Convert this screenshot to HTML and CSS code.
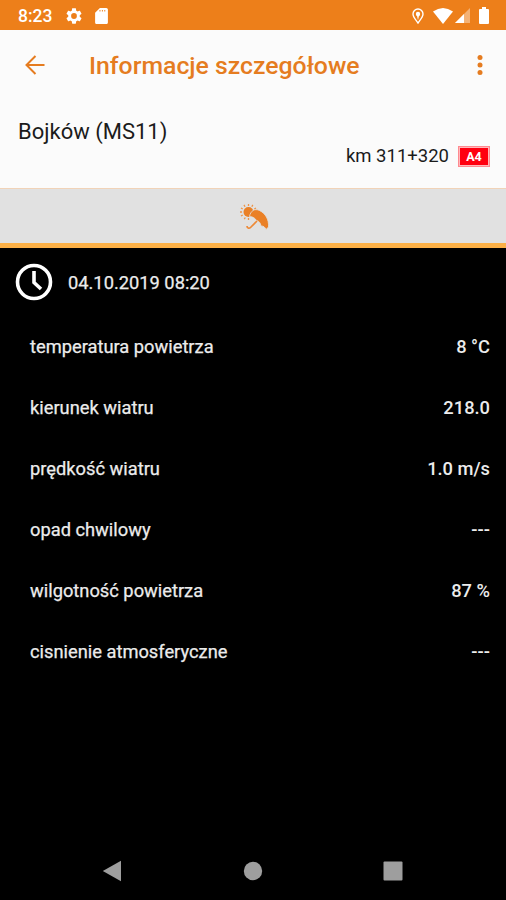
FILE: index.html
```html
<!DOCTYPE html>
<html lang="pl">
<head>
<meta charset="utf-8">
<title>Informacje szczegółowe</title>
<link rel="stylesheet" href="styles.css">
</head>
<body>
<div class="screen">
  <div class="status">
    <span class="time">8:23</span>
    <svg class="gear" viewBox="2 2 20 20"><path fill-rule="evenodd" d="M19.14 12.94c.04-.3.06-.61.06-.94s-.02-.64-.07-.94l2.03-1.58c.18-.14.23-.41.12-.61l-1.92-3.32c-.12-.22-.37-.29-.59-.22l-2.39.96c-.5-.38-1.03-.7-1.62-.94l-.36-2.54c-.04-.24-.24-.41-.48-.41h-3.84c-.24 0-.43.17-.47.41l-.36 2.54c-.59.24-1.13.57-1.62.94l-2.39-.96c-.22-.08-.47 0-.59.22L2.74 8.87c-.12.21-.08.47.12.61l2.03 1.58c-.05.3-.09.63-.09.94s.02.64.07.94l-2.03 1.58c-.18.14-.23.41-.12.61l1.92 3.32c.12.22.37.29.59.22l2.39-.96c.5.38 1.03.7 1.62.94l.36 2.54c.05.24.24.41.48.41h3.84c.24 0 .44-.17.47-.41l.36-2.54c.59-.24 1.13-.56 1.62-.94l2.39.96c.22.08.47 0 .59-.22l1.92-3.32c.12-.22.07-.47-.12-.61zM12 15.6a3.6 3.6 0 1 1 0-7.2 3.6 3.6 0 0 1 0 7.2z"/></svg>
    <svg class="card" viewBox="4 2 16 20"><path fill-rule="evenodd" d="M18 2h-8L4.02 8 4 20c0 1.1.9 2 2 2h12c1.1 0 2-.9 2-2V4c0-1.1-.9-2-2-2zM9.5 4.500h1.200v2H9.500zm3 0h1.200v2h-1.200zm3 0h1.200v2h-1.200z"/></svg>
    <span class="fill"></span>
    <svg class="pin" viewBox="0 0 12 16"><path class="line" d="M6 15C3.5 11.500 1 9 1 6a5 5 0 0 1 10 0c0 3-2.500 5.500-5 9z"/><circle cx="6" cy="6" r="2.200"/><path d="M4.800 7h2.400L6 12z"/></svg>
    <svg class="wifi" viewBox="0 0 20 16"><path d="M0 3.500Q10-3.500 20 3.500L10 16z"/></svg>
    <svg class="signal" viewBox="0 0 15 15"><path opacity=".4" d="M15 0v15H0z"/><path d="M9 6v9H0z"/></svg>
    <svg class="battery" viewBox="0 0 10 17"><path d="M3 0h4v2h2q1 0 1 1v13q0 1-1 1H1q-1 0-1-1V3q0-1 1-1h2z"/></svg>
  </div>
  <header class="bar">
    <svg class="back" viewBox="0 0 20 20"><path d="M19.500 10H2M10.500 1L1.500 10l9 9"/></svg>
    <h1 class="title">Informacje szczegółowe</h1>
    <svg class="more" viewBox="0 0 6 20"><circle cx="3" cy="2.600" r="2.500"/><circle cx="3" cy="10" r="2.500"/><circle cx="3" cy="17.400" r="2.500"/></svg>
  </header>
  <section class="station">
    <div class="name">Bojków (MS11)</div>
    <div class="place"><span>km 311+320</span><span class="road"><b>A4</b></span></div>
  </section>
  <div class="tab">
    <svg class="weather" viewBox="0 0 30 30">
      <circle class="sun" cx="9.500" cy="8" r="5"/>
      <path class="rays" d="M9.500 2V0M6 2.700L5 .9M3.700 5L2 4M3 8H1M3.700 11L2 12M12.800 2.700l1-1.800M15.300 5L17 4M6.300 13.500l-1 1.700M9.500 14v2"/>
      <path class="canopy" d="M10.500 12.500C11.500 7 15.500 4 20.500 6.500c6 3 9.500 9 9 16.500L27 25.500c-1-2.500-2.500-3.500-5-3.500-.5-3-1.800-4.800-4.500-5.500-1.500-2.500-4-4-7-4z"/>
      <path class="handle" d="M18 17l-6.500 6.500c-1.500 1.500-3.500.5-3.500-1.500"/>
    </svg>
  </div>
  <main class="data">
    <div class="stamp">
      <svg class="clock" viewBox="0 0 38 38"><circle cx="19" cy="19" r="16.500"/><path d="M19 8v11.500l7 6.500"/></svg>
      <span>04.10.2019 08:20</span>
    </div>
    <div class="row"><span>temperatura powietrza</span><span class="value">8 °C</span></div>
    <div class="row"><span>kierunek wiatru</span><span class="value">218.0</span></div>
    <div class="row"><span>prędkość wiatru</span><span class="value">1.0 m/s</span></div>
    <div class="row"><span>opad chwilowy</span><span class="value">---</span></div>
    <div class="row"><span>wilgotność powietrza</span><span class="value">87 %</span></div>
    <div class="row"><span>cisnienie atmosferyczne</span><span class="value">---</span></div>
  </main>
  <nav class="nav">
    <svg viewBox="0 0 20 22"><path d="M19 .8v20.400L.8 11z"/></svg>
    <svg viewBox="0 0 20 22"><circle cx="10" cy="11" r="9.200"/></svg>
    <svg viewBox="0 0 20 22"><rect x=".5" y="1.500" width="19" height="19" rx="1"/></svg>
  </nav>
</div>
</body>
</html>
```

FILE: styles.css
```css
* { box-sizing: border-box; }
body { margin: 0; font-family: Roboto, "Noto Sans", sans-serif; background: #000; }
svg { display: block; flex: none; }
.screen { width: 506px; height: 900px; display: flex; flex-direction: column; background: #000; }
.status { height: 30px; flex: none; display: flex; align-items: center; padding: 1px 17px 0 18px; background: #ed7f1a; color: #fff; }
.status svg { fill: #fff; }
.time { width: 48px; font-size: 17.5px; font-weight: 500; line-height: 30px; }
.gear { width: 16px; height: 16px; }
.card { width: 13px; height: 16px; margin-left: 13px; }
.fill { flex: 1; }
.pin { width: 12px; height: 16px; margin-right: 9px; }
.pin .line { fill: none; stroke: #fff; stroke-width: 1.4; }
.wifi { width: 20px; height: 16px; margin-right: 2px; }
.signal { width: 15px; height: 15px; margin-right: 9px; }
.battery { width: 10px; height: 17px; }
.bar { height: 71px; flex: none; display: flex; align-items: center; padding: 0 23px 2px 25px; background: #fbfbfb; }
.back { width: 20px; height: 20px; fill: none; stroke: #e57c20; stroke-width: 2; }
.title { flex: 1; margin: 1px 0 0 44px; font-size: 24.8px; font-weight: 500; color: #e57c20; white-space: nowrap; }
.more { width: 6px; height: 20px; fill: #e57c20; }
.station { height: 88px; flex: none; padding: 17px 16px 0 18px; background: #fbfbfb; border-bottom: 1px solid #f1d3b8; color: #1b1b1b; }
.name { font-size: 22px; line-height: 28px; }
.place { display: flex; justify-content: flex-end; align-items: center; height: 20px; font-size: 18.5px; }
.road { display: flex; align-items: center; justify-content: center; width: 32px; height: 21px; margin-left: 9px; border: 1px solid #ff8a90; background: #ff0010; box-shadow: inset 0 0 0 1px #ffb8bb; color: #fff; font-size: 12.5px; }
.tab { height: 59px; flex: none; display: flex; justify-content: center; background: #e1e1e1; border-bottom: 5px solid #fbb047; padding: 15px 0 0 2px; }
.weather { width: 30px; height: 30px; }
.sun, .canopy { fill: #ea8026; }
.canopy { stroke: #e1e1e1; stroke-width: .8; }
.rays { fill: none; stroke: #ed9448; stroke-width: 1.3; }
.handle { fill: none; stroke: #ed8a38; stroke-width: 1.7; }
.data { flex: 1; color: #ececec; font-size: 18.3px; -webkit-text-stroke: .25px currentColor; }
.stamp { height: 68px; display: flex; align-items: center; gap: 15px; padding-left: 15px; }
.clock { width: 38px; height: 38px; fill: none; stroke: #fff; stroke-width: 3.6; }
.row { height: 61px; display: flex; align-items: center; justify-content: space-between; padding: 0 16px 0 30px; }
.value { font-weight: 500; -webkit-text-stroke: 0; }
.nav { height: 58px; flex: none; display: flex; align-items: center; justify-content: space-between; padding: 0 103px 0 102px; }
.nav svg { width: 20px; height: 22px; fill: #9e9e9e; }
```
